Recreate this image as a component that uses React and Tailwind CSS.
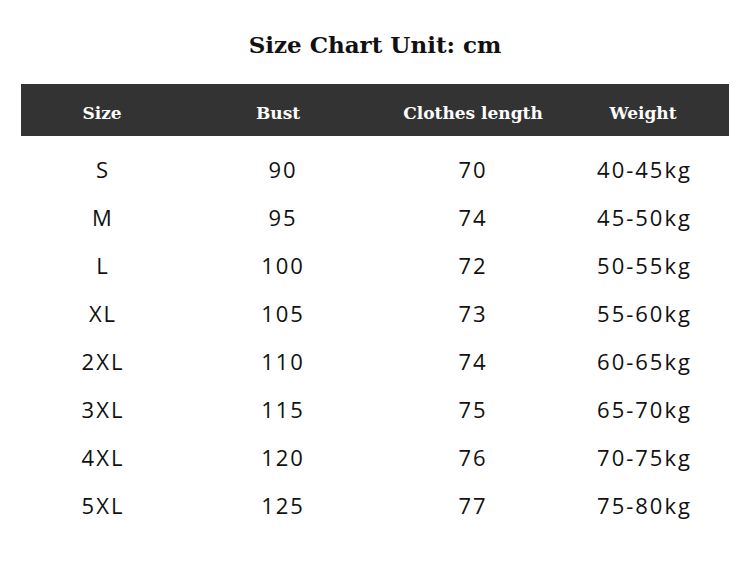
import React from 'react';

const rows = [
  ['S', '90', '70', '40-45kg'],
  ['M', '95', '74', '45-50kg'],
  ['L', '100', '72', '50-55kg'],
  ['XL', '105', '73', '55-60kg'],
  ['2XL', '110', '74', '60-65kg'],
  ['3XL', '115', '75', '65-70kg'],
  ['4XL', '120', '76', '70-75kg'],
  ['5XL', '125', '77', '75-80kg'],
];

const headers = ['Size', 'Bust', 'Clothes length', 'Weight'];

export default function App() {
  return (
    <div className="w-[750px] h-[562px] bg-white overflow-hidden">
      <h1 className="pt-[30px] text-center text-[23px] leading-[30px] font-bold text-[#111] font-['DejaVu_Serif',serif]">
        Size Chart Unit: cm
      </h1>
      <div className="mx-[21px] mt-[24px]">
        <div className="grid grid-cols-[162px_190px_200px_140px] h-[52px] pt-[8px] items-center bg-[#333333] text-white font-['DejaVu_Serif',serif] font-bold text-[17px]">
          {headers.map((h) => (
            <div key={h} className="text-center">{h}</div>
          ))}
        </div>
        <div className="pt-[9px] font-['Open_Sans',sans-serif] text-[22px] tracking-[2px] text-[#111]">
          {rows.map((r) => (
            <div key={r[0]} className="grid grid-cols-[164px_196px_184px_159px] h-[48px] items-center">
              {r.map((c, i) => (
                <div key={i} className="text-center">{c}</div>
              ))}
            </div>
          ))}
        </div>
      </div>
    </div>
  );
}
